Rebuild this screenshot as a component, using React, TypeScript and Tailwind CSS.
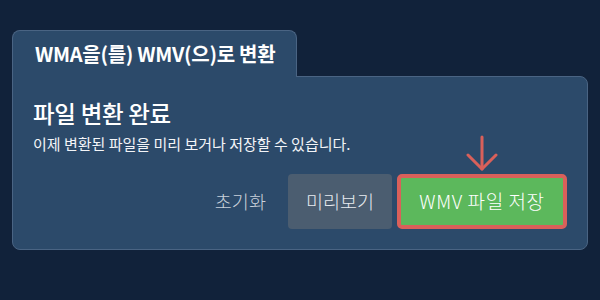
export default function App() {
  return (
    <div
      className="w-[600px] h-[300px] bg-[#11223a] pl-3 pt-[30px] text-white"
      style={{ fontFamily: '"Noto Sans CJK KR", "Noto Sans", sans-serif' }}
    >
      <div className="relative z-10 -mb-px flex h-[47px] w-[285px] items-center rounded-t-lg border border-b-0 border-[#4a6483] bg-[#2c4a6a] pl-[22px]">
        <span className="text-[20px] font-bold tracking-[-0.3px]">WMA을(를) WMV(으)로 변환</span>
      </div>

      <div className="h-[174px] w-[576px] rounded-b-lg rounded-tr-lg border border-[#4a6483] bg-[#2c4a6a] pl-[20px] pr-[20px] pt-[18px]">
        <h1 className="text-[23.5px] font-medium leading-[36px] tracking-[-0.3px]">파일 변환 완료</h1>
        <p className="mt-[3px] text-[15px] leading-5 text-[#f3f5f8]">
          이제 변환된 파일을 미리 보거나 저장할 수 있습니다.
        </p>

        <div className="mt-[20px] flex items-center justify-end">
          <button className="mr-[22px] text-[18.5px] font-light text-[#c9d1db]">초기화</button>
          <button className="h-[55px] rounded bg-[#4b5d70] px-[18px] text-[18.5px] font-light text-[#e8ecf0]">
            미리보기
          </button>
          <div className="relative ml-[5px]">
            <svg
              className="absolute left-1/2 top-[-39px] -translate-x-1/2"
              width="34"
              height="36"
              viewBox="0 0 34 36"
              fill="none"
              stroke="#d9605a"
              strokeWidth="3"
              strokeLinecap="round"
              strokeLinejoin="round"
            >
              <path d="M17 2v32" />
              <path d="M3 20l14 14 14-14" />
            </svg>
            <button className="h-[55px] w-[170px] rounded-[5px] border-4 border-[#d9605a] bg-[#5cb85c] text-[19px] font-light tracking-[0.6px] text-white">
              WMV 파일 저장
            </button>
          </div>
        </div>
      </div>
    </div>
  )
}
